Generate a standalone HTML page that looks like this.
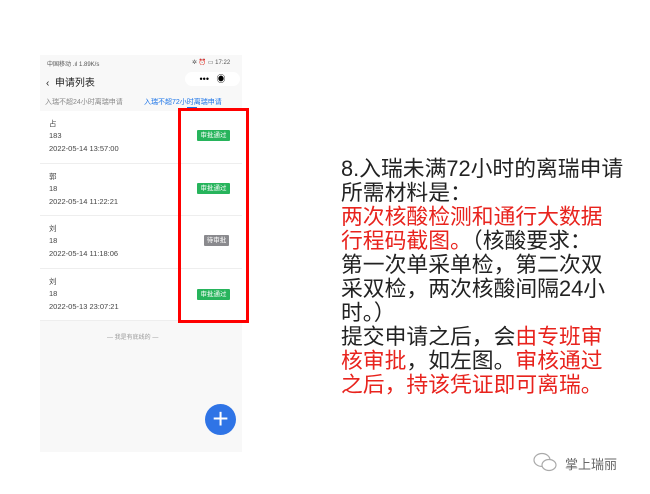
<!DOCTYPE html>
<html><head><meta charset="utf-8"><style>
*{margin:0;padding:0;box-sizing:border-box}
body{width:650px;height:494px;background:#fff;position:relative;overflow:hidden;font-family:"Liberation Sans","Noto Sans CJK SC",sans-serif}
.ph{position:absolute;left:40px;top:55px;width:202px;height:397px;background:#f8f8f8}
.a{position:absolute;white-space:nowrap}
.it{position:absolute;left:0;width:202px;background:#fff;border-bottom:1px solid #eee}
.tx{font-size:7.5px;color:#444;position:absolute;left:9px}
.bd{position:absolute;left:157px;width:33px;height:11px;font-size:6.5px;color:#fff;text-align:center;line-height:11px;border-radius:1px}
.r{position:absolute;left:341px;top:157px;font-size:21.8px;line-height:24px;color:#222;white-space:nowrap;font-family:"Liberation Sans","Noto Sans CJK SC",sans-serif}
.red{color:#e8231d}
</style></head><body>
<div class="ph">
 <div class="a" style="left:7px;top:4px;font-size:6px;color:#555">中国移动 .ıl 1.89K/s</div>
 <div class="a" style="left:152px;top:4px;font-size:6px;color:#555">✲ ⏰ ▭ 17:22</div>
 <div class="a" style="left:6px;top:19px;font-size:10px;color:#222">‹&nbsp;&nbsp;申请列表</div>
 <div class="a" style="left:145px;top:17px;width:55px;height:14px;border-radius:7px;background:#fff;font-size:9px;text-align:center;line-height:14px">••• &nbsp;&nbsp;◉</div>
 <div class="a" style="left:5px;top:42px;font-size:7px;color:#888">入瑞不超24小时离瑞申请</div>
 <div class="a" style="left:104px;top:42px;font-size:7px;color:#1a73e8">入瑞不超72小时离瑞申请</div>
 <div class="a" style="left:147px;top:52px;width:10px;height:2px;background:#1a73e8"></div>
 <div class="it" style="top:56px;height:53px"><div class="tx" style="top:7px">占</div><div class="tx" style="top:20px">183</div><div class="tx" style="top:33px">2022-05-14 13:57:00</div><div class="bd" style="top:19px;background:#27b45c">审批通过</div></div>
 <div class="it" style="top:109px;height:52px"><div class="tx" style="top:7px">郭</div><div class="tx" style="top:20px">18</div><div class="tx" style="top:33px">2022-05-14 11:22:21</div><div class="bd" style="top:19px;background:#27b45c">审批通过</div></div>
 <div class="it" style="top:161px;height:53px"><div class="tx" style="top:7px">刘</div><div class="tx" style="top:20px">18</div><div class="tx" style="top:33px">2022-05-14 11:18:06</div><div class="bd" style="top:19px;left:164px;width:25px;background:#8a8a8e">待审批</div></div>
 <div class="it" style="top:214px;height:52px"><div class="tx" style="top:7px">刘</div><div class="tx" style="top:20px">18</div><div class="tx" style="top:33px">2022-05-13 23:07:21</div><div class="bd" style="top:20px;background:#27b45c">审批通过</div></div>
 <div class="a" style="left:67px;top:277px;font-size:6px;color:#999">— 我是有底线的 —</div>
 <div class="a" style="left:165px;top:349px;width:31px;height:31px;border-radius:50%;background:#2f74e6;color:#fff;font-size:28px;line-height:29px;text-align:center">+</div>
</div>
<div class="a" style="left:178px;top:108px;width:71px;height:215px;border:3px solid #f00"></div>
<div class="r">8.入瑞未满72小时的离瑞申请<br>所需材料是：<br><span class="red">两次核酸检测和通行大数据</span><br><span class="red">行程码截图。</span>（核酸要求：<br>第一次单采单检，第二次双<br>采双检，两次核酸间隔24小<br>时。）<br>提交申请之后，会<span class="red">由专班审</span><br><span class="red">核审批</span>，如左图。<span class="red">审核通过</span><br><span class="red">之后，持该凭证即可离瑞。</span></div>
<svg class="a" style="left:532px;top:452px" width="28" height="20" viewBox="0 0 28 20"><ellipse cx="10" cy="8" rx="8" ry="6.5" fill="none" stroke="#aaa" stroke-width="1.2"/><ellipse cx="17" cy="13" rx="7" ry="5.5" fill="#fff" stroke="#aaa" stroke-width="1.2"/></svg>
<div class="a" style="left:565px;top:454px;font-size:13px;color:#666">掌上瑞丽</div>
</body></html>
